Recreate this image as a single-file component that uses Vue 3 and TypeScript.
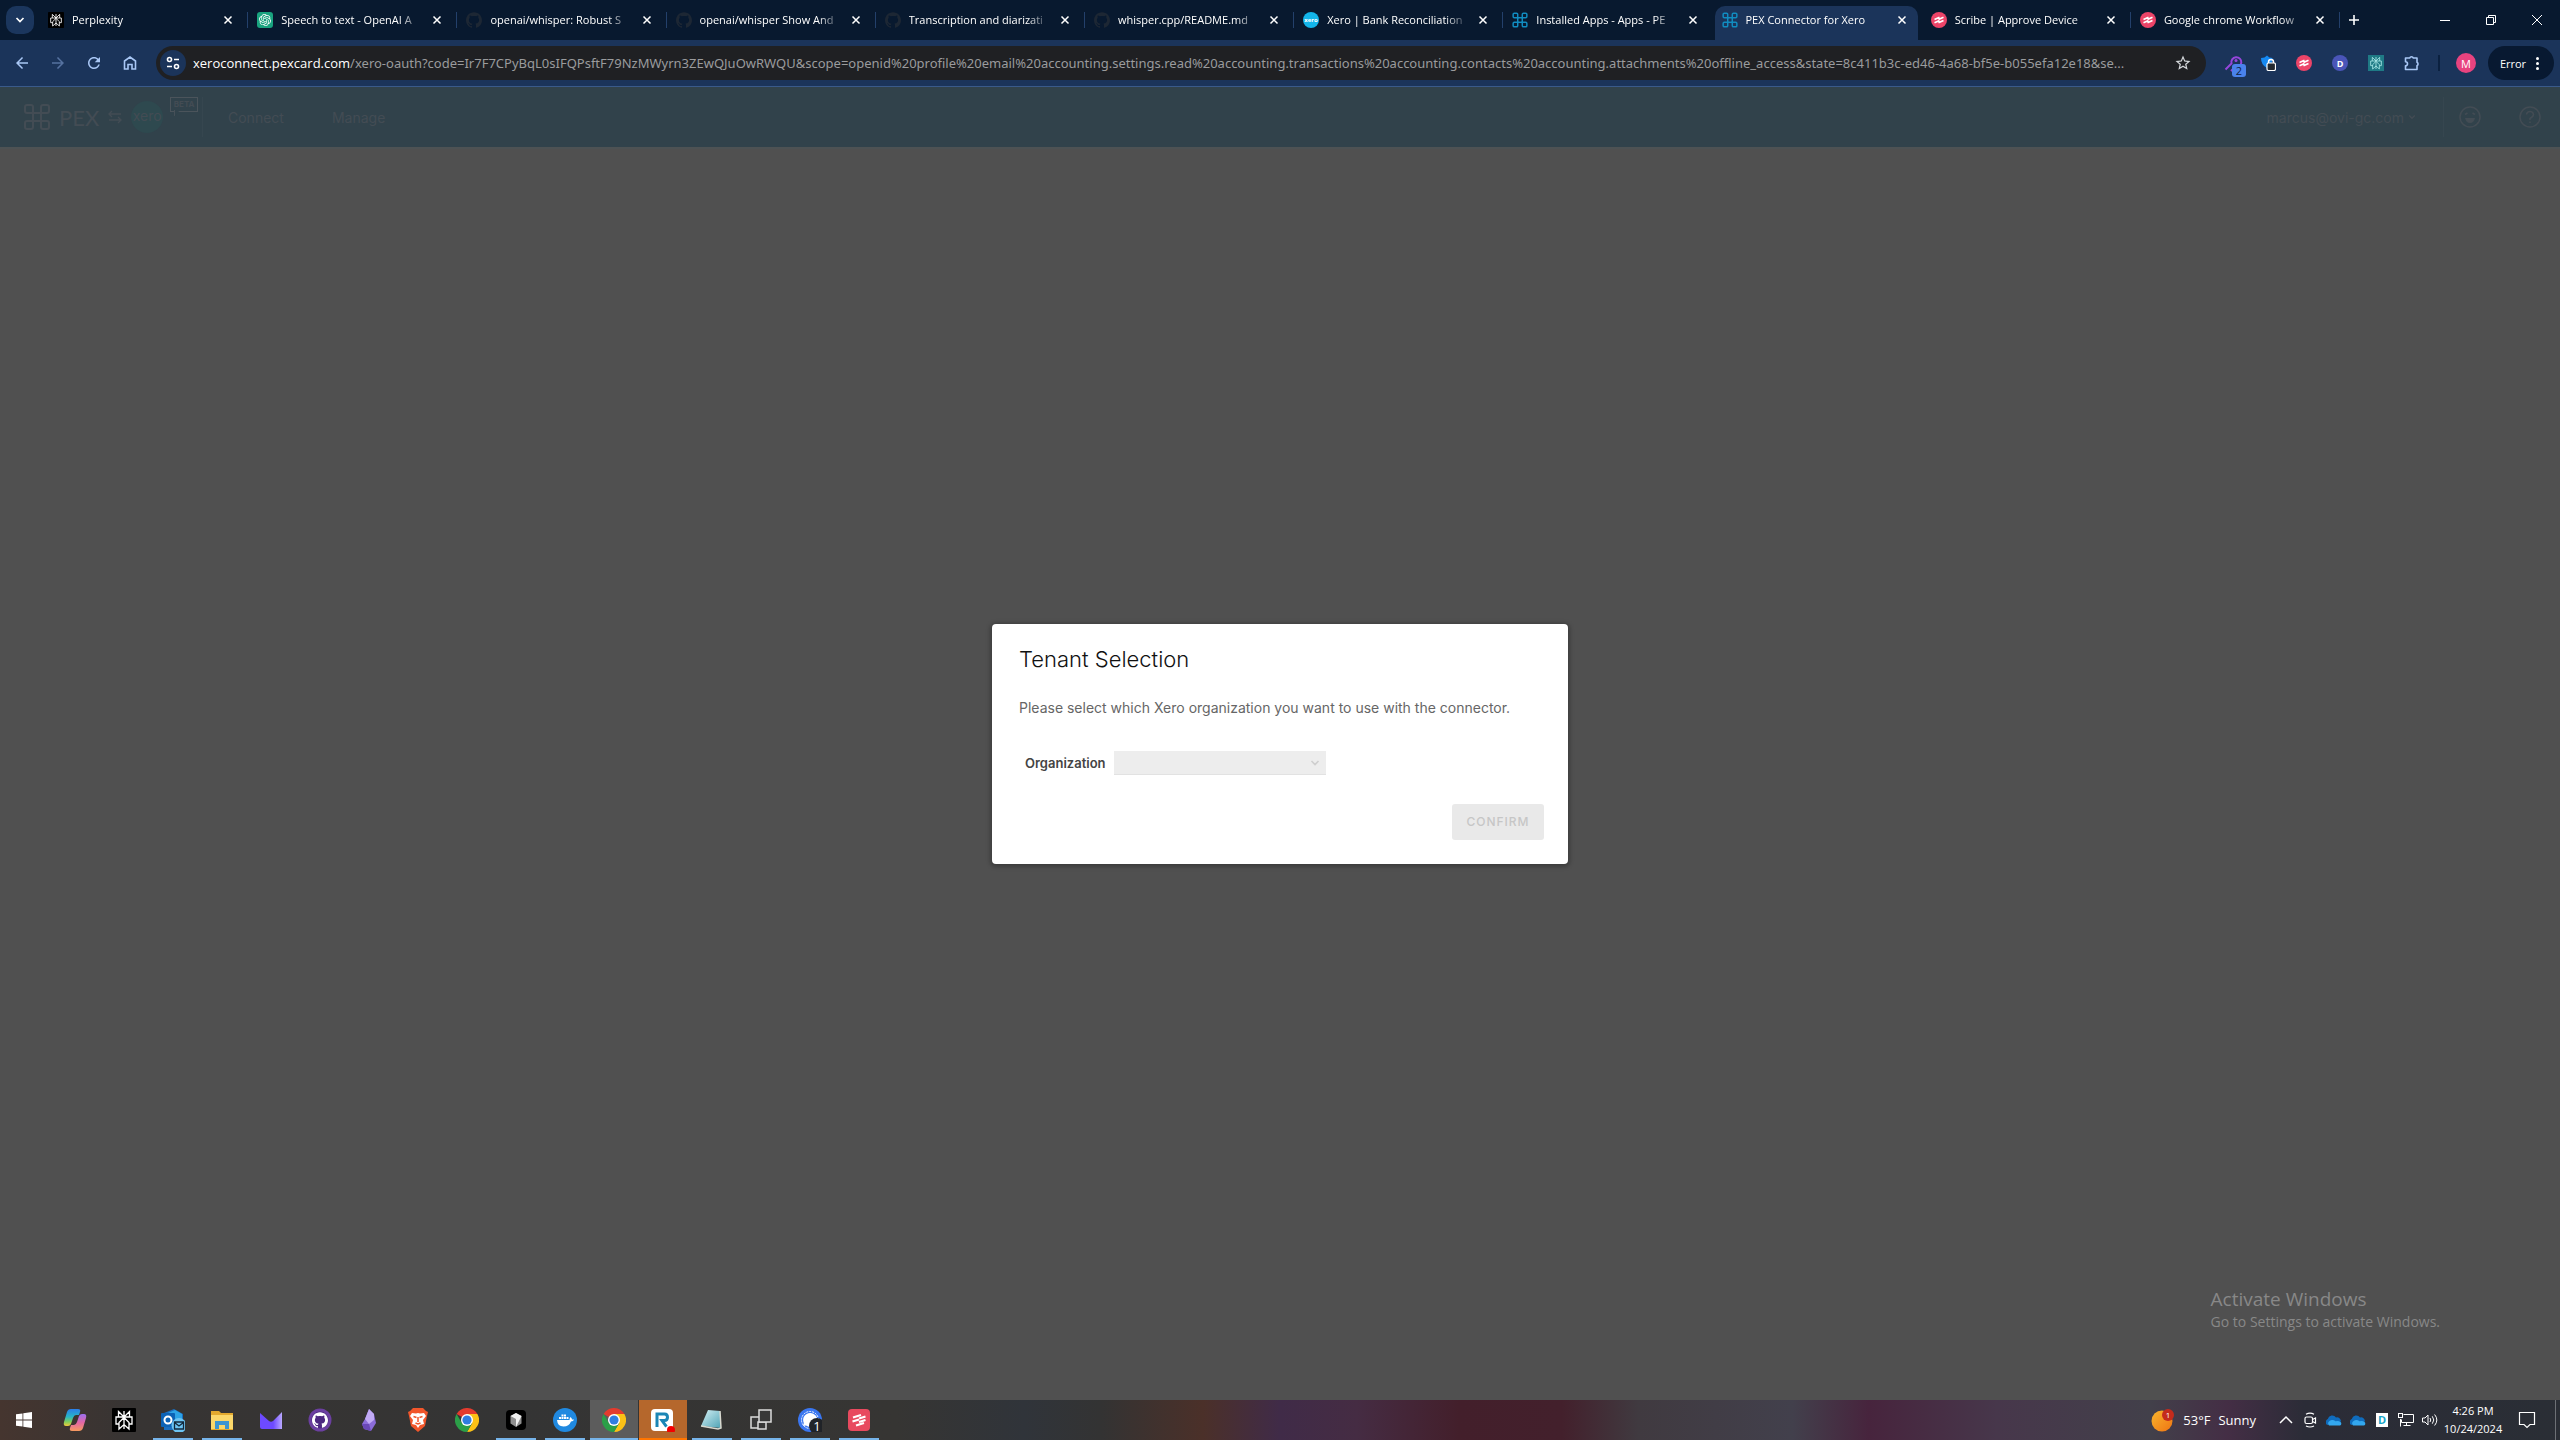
<script setup lang="ts">
import { ref } from 'vue'

interface Tab {
  title: string
  icon: string
  active?: boolean
}

interface TaskItem {
  name: string
  icon: string
  state?: 'running' | 'active' | 'alert'
}

const tabs: Tab[] = [
  { title: 'Perplexity', icon: 'perplexity' },
  { title: 'Speech to text - OpenAI A', icon: 'openai' },
  { title: 'openai/whisper: Robust S', icon: 'github-dim' },
  { title: 'openai/whisper Show And', icon: 'github-dim' },
  { title: 'Transcription and diarizati', icon: 'github-dim' },
  { title: 'whisper.cpp/README.md', icon: 'github-dim' },
  { title: 'Xero | Bank Reconciliation', icon: 'xero' },
  { title: 'Installed Apps - Apps - PE', icon: 'pex' },
  { title: 'PEX Connector for Xero', icon: 'pex', active: true },
  { title: 'Scribe | Approve Device', icon: 'scribe' },
  { title: 'Google chrome Workflow', icon: 'scribe' },
]

const extensions = [
  { name: 'Passwords', icon: 'ext-key' },
  { name: 'Privacy', icon: 'ext-lock' },
  { name: 'Scribe', icon: 'scribe' },
  { name: 'Dashlane', icon: 'ext-d' },
  { name: 'Perplexity', icon: 'ext-perplexity' },
  { name: 'Extensions', icon: 'puzzle' },
]

const tasks: TaskItem[] = [
  { name: 'Copilot', icon: 'copilot' },
  { name: 'Perplexity', icon: 'perplexity' },
  { name: 'Outlook', icon: 'outlook', state: 'running' },
  { name: 'File Explorer', icon: 'explorer', state: 'running' },
  { name: 'Proton Mail', icon: 'proton' },
  { name: 'GitHub Desktop', icon: 'github-purple' },
  { name: 'Obsidian', icon: 'obsidian' },
  { name: 'Brave', icon: 'brave' },
  { name: 'Chrome', icon: 'chrome' },
  { name: 'Cursor', icon: 'cursor', state: 'running' },
  { name: 'Docker', icon: 'docker', state: 'running' },
  { name: 'Chrome window', icon: 'chrome', state: 'active' },
  { name: 'Recorder', icon: 'recorder', state: 'alert' },
  { name: 'Notepad', icon: 'notepad', state: 'running' },
  { name: 'Task view', icon: 'windows-stack', state: 'running' },
  { name: 'Signal', icon: 'signal', state: 'running' },
  { name: 'Scribe', icon: 'scribe-square', state: 'running' },
]

const tray = ['tray-camera', 'cloud', 'cloud', 'tray-d', 'network', 'volume']

const path = ref(
  '/xero-oauth?code=Ir7F7CPyBqL0sIFQPsftF79NzMWyrn3ZEwQJuOwRWQU&scope=openid%20profile%20email%20accounting.settings.read%20accounting.transactions%20accounting.contacts%20accounting.attachments%20offline_access&state=8c411b3c-ed46-4a68-bf5e-b055efa12e18&se...',
)
const organization = ref('')
</script>

<template>
  <svg class="sprite" aria-hidden="true">
    <defs>
      <linearGradient id="g-copilot-a" x1="0" y1="0" x2="0" y2="1">
        <stop offset="0" stop-color="#2b7de9" />
        <stop offset=".45" stop-color="#27b5c8" />
        <stop offset=".75" stop-color="#7fce5b" />
        <stop offset="1" stop-color="#f0c83c" />
      </linearGradient>
      <linearGradient id="g-copilot-b" x1="0" y1="0" x2="0" y2="1">
        <stop offset="0" stop-color="#9a6ff0" />
        <stop offset=".5" stop-color="#e267a5" />
        <stop offset="1" stop-color="#f79a5e" />
      </linearGradient>
      <linearGradient id="g-sun" x1="0" y1="0" x2="1" y2="1">
        <stop offset="0" stop-color="#f9b52c" />
        <stop offset="1" stop-color="#ef7413" />
      </linearGradient>
      <linearGradient id="g-note" x1="0" y1="0" x2="1" y2="1">
        <stop offset="0" stop-color="#d5f1f5" />
        <stop offset="1" stop-color="#4fa3b5" />
      </linearGradient>
      <linearGradient id="g-proton" x1="0" y1="0" x2="1" y2="0">
        <stop offset="0" stop-color="#6d4aff" />
        <stop offset=".6" stop-color="#6d4aff" />
        <stop offset="1" stop-color="#b9a8ff" />
      </linearGradient>
    </defs>

    <symbol id="chevron-down" viewBox="0 0 10 10">
      <path d="M1.500 3L5 6.500 8.500 3" fill="none" stroke="currentColor" stroke-width="1.700" />
    </symbol>
    <symbol id="chevron-up" viewBox="0 0 14 14">
      <path d="M1 10l6-6 6 6" fill="none" stroke="currentColor" stroke-width="1.500" />
    </symbol>
    <symbol id="close" viewBox="0 0 10 10">
      <path d="M1.500 1.500l7 7M8.500 1.500l-7 7" stroke="currentColor" stroke-width="1.500" />
    </symbol>
    <symbol id="plus" viewBox="0 0 12 12">
      <path d="M6 1v10M1 6h10" stroke="currentColor" stroke-width="1.600" />
    </symbol>
    <symbol id="minimize" viewBox="0 0 12 12">
      <path d="M1 6.500h10" stroke="currentColor" />
    </symbol>
    <symbol id="restore" viewBox="0 0 12 12">
      <path d="M1.500 3.500h7v7h-7zM3.500 3.500v-2h7v7h-2" fill="none" stroke="currentColor" />
    </symbol>
    <symbol id="close-window" viewBox="0 0 12 12">
      <path d="M1 1l10 10M11 1L1 11" stroke="currentColor" />
    </symbol>
    <symbol id="back" viewBox="0 0 24 24">
      <path d="M20 11H7.830l5.590-5.590L12 4l-8 8 8 8 1.410-1.410L7.830 13H20z" fill="currentColor" />
    </symbol>
    <symbol id="forward" viewBox="0 0 24 24">
      <path d="M4 11h12.170l-5.590-5.590L12 4l8 8-8 8-1.410-1.410L16.170 13H4z" fill="currentColor" />
    </symbol>
    <symbol id="reload" viewBox="0 0 24 24">
      <path
        d="M17.650 6.350C16.200 4.900 14.210 4 12 4c-4.420 0-7.990 3.580-7.990 8s3.570 8 7.990 8c3.730 0 6.840-2.550 7.730-6h-2.080c-.82 2.330-3.040 4-5.650 4-3.310 0-6-2.690-6-6s2.690-6 6-6c1.660 0 3.140.69 4.220 1.780L13 11h7V4z"
        fill="currentColor"
      />
    </symbol>
    <symbol id="home" viewBox="0 0 16 16">
      <path d="M2.500 14V6L8 2l5.500 4v8h-3.500V9.500H6V14z" fill="none" stroke="currentColor" stroke-width="1.600" />
    </symbol>
    <symbol id="tune" viewBox="0 0 16 16">
      <g fill="none" stroke="currentColor" stroke-width="1.600">
        <circle cx="4.500" cy="4.500" r="2" />
        <path d="M9 4.500h5M2 11.500h5" />
        <circle cx="11.500" cy="11.500" r="2" />
      </g>
    </symbol>
    <symbol id="star" viewBox="0 0 24 24">
      <path
        d="M22 9.240l-7.190-.62L12 2 9.190 8.630 2 9.240l5.460 4.730L5.820 21 12 17.270 18.180 21l-1.630-7.030zM12 15.400l-3.760 2.270 1-4.280-3.320-2.880 4.380-.38L12 6.100l1.710 4.040 4.380.38-3.320 2.880 1 4.280z"
        fill="currentColor"
      />
    </symbol>
    <symbol id="puzzle" viewBox="0 0 16 16">
      <path
        d="M1.500 3h4.200a1.900 1.900 0 0 1 3.600 0h3.700v4.200a1.900 1.900 0 0 1 0 3.400V14.500H1.500v-3.700a2 2 0 0 0 0-4z"
        fill="none"
        stroke="#a9c7f5"
        stroke-width="1.600"
        stroke-linejoin="round"
      />
    </symbol>
    <symbol id="perplexity" viewBox="0 0 24 24">
      <rect width="24" height="24" rx="1" fill="#000" />
      <g fill="none" stroke="#fff" stroke-width="1.300">
        <path d="M12 3v18M6.500 3.500L12 9l5.500-5.500V9H6.500zM6.500 9H4v7h3M17.500 9H20v7h-3M12 9.500l-5 5V21l5-4.500 5 4.500v-6.500z" />
      </g>
    </symbol>
    <symbol id="ext-perplexity" viewBox="0 0 24 24">
      <rect width="24" height="24" fill="#1f7a85" />
      <g fill="none" stroke="#a7e5e6" stroke-width="1.300">
        <path d="M12 3v18M6.500 3.500L12 9l5.500-5.500V9H6.500zM6.500 9H4v7h3M17.500 9H20v7h-3M12 9.500l-5 5V21l5-4.500 5 4.500v-6.500z" />
      </g>
    </symbol>
    <symbol id="openai" viewBox="0 0 32 32">
      <rect width="32" height="32" rx="6" fill="#19a37f" />
      <path
        transform="translate(4 4)"
        fill="#fff"
        d="M22.282 9.821a5.985 5.985 0 0 0-.516-4.910 6.046 6.046 0 0 0-6.510-2.900A6.065 6.065 0 0 0 4.981 4.180a5.985 5.985 0 0 0-3.998 2.900 6.046 6.046 0 0 0 .743 7.097 5.980 5.980 0 0 0 .510 4.911 6.051 6.051 0 0 0 6.515 2.900A5.985 5.985 0 0 0 13.260 24a6.056 6.056 0 0 0 5.772-4.206 5.990 5.990 0 0 0 3.997-2.900 6.056 6.056 0 0 0-.747-7.073zM13.260 22.430a4.476 4.476 0 0 1-2.876-1.040l.141-.081 4.779-2.758a.795.795 0 0 0 .392-.681v-6.737l2.020 1.168a.071.071 0 0 1 .038.052v5.583a4.504 4.504 0 0 1-4.494 4.494zM3.600 18.304a4.470 4.470 0 0 1-.535-3.014l.142.085 4.783 2.759a.771.771 0 0 0 .780 0l5.843-3.369v2.332a.080.080 0 0 1-.033.062L9.740 19.950a4.500 4.500 0 0 1-6.140-1.646zM2.340 7.896a4.485 4.485 0 0 1 2.366-1.973V11.600a.766.766 0 0 0 .388.676l5.815 3.355-2.020 1.168a.076.076 0 0 1-.071 0l-4.830-2.786A4.504 4.504 0 0 1 2.340 7.872zm16.597 3.855l-5.833-3.387L15.119 7.200a.076.076 0 0 1 .071 0l4.830 2.791a4.494 4.494 0 0 1-.676 8.105v-5.678a.790.790 0 0 0-.407-.667zm2.010-3.023l-.141-.085-4.774-2.782a.776.776 0 0 0-.785 0L9.409 9.230V6.897a.066.066 0 0 1 .028-.061l4.830-2.787a4.500 4.500 0 0 1 6.680 4.660zm-12.640 4.135l-2.020-1.164a.080.080 0 0 1-.038-.057V6.075a4.500 4.500 0 0 1 7.375-3.453l-.142.080L8.704 5.460a.795.795 0 0 0-.393.681zm1.097-2.365l2.602-1.500 2.607 1.500v2.999l-2.597 1.500-2.607-1.500z"
      />
    </symbol>
    <symbol id="octocat" viewBox="0 0 24 24">
      <path
        fill="currentColor"
        d="M12 .297c-6.630 0-12 5.373-12 12 0 5.303 3.438 9.800 8.205 11.385.6.113.82-.258.82-.577 0-.285-.01-1.040-.015-2.040-3.338.724-4.042-1.610-4.042-1.610C4.422 18.070 3.633 17.700 3.633 17.700c-1.087-.744.084-.729.084-.729 1.205.084 1.838 1.236 1.838 1.236 1.070 1.835 2.809 1.305 3.495.998.108-.776.417-1.305.760-1.605-2.665-.300-5.466-1.332-5.466-5.930 0-1.310.465-2.380 1.235-3.220-.135-.303-.540-1.523.105-3.176 0 0 1.005-.322 3.300 1.230.960-.267 1.980-.399 3-.405 1.020.006 2.040.138 3 .405 2.280-1.552 3.285-1.230 3.285-1.230.645 1.653.240 2.873.120 3.176.765.840 1.230 1.910 1.230 3.220 0 4.610-2.805 5.625-5.475 5.920.420.360.810 1.096.810 2.220 0 1.606-.015 2.896-.015 3.286 0 .315.210.690.825.570C20.565 22.092 24 17.592 24 12.297c0-6.627-5.373-12-12-12"
      />
    </symbol>
    <symbol id="github-dim" viewBox="0 0 24 24">
      <use href="#octocat" width="24" height="24" color="#1d2734" />
    </symbol>
    <symbol id="github-purple" viewBox="0 0 24 24">
      <circle cx="12" cy="12" r="11.500" fill="#6b3fa0" />
      <circle cx="12" cy="12" r="8.500" fill="#4c2880" />
      <use href="#octocat" x="4" y="4" width="16" height="16" color="#fff" />
    </symbol>
    <symbol id="xero" viewBox="0 0 16 16">
      <circle cx="8" cy="8" r="8" fill="#13b5ea" />
      <text x="8" y="10" font-family="Open Sans, sans-serif" font-size="6" font-weight="700" text-anchor="middle" fill="#fff">xero</text>
    </symbol>
    <symbol id="pex-mark" viewBox="0 0 28 28">
      <g fill="none" stroke="currentColor">
        <rect x="10" y="10" width="8" height="8" />
        <path d="M10 10H4a2 2 0 0 1-2-2V4a2 2 0 0 1 2-2h4a2 2 0 0 1 2 2zM18 10h6a2 2 0 0 0 2-2V4a2 2 0 0 0-2-2h-4a2 2 0 0 0-2 2zM10 18H4a2 2 0 0 0-2 2v4a2 2 0 0 0 2 2h4a2 2 0 0 0 2-2zM18 18h6a2 2 0 0 1 2 2v4a2 2 0 0 1-2 2h-4a2 2 0 0 1-2-2z" />
      </g>
    </symbol>
    <symbol id="pex" viewBox="0 0 28 28">
      <use href="#pex-mark" width="28" height="28" color="#118cc0" stroke-width="2.600" />
    </symbol>
    <symbol id="scribe" viewBox="0 0 16 16">
      <circle cx="8" cy="8" r="8" fill="#ec4468" />
      <path
        d="M3.500 7.500l5-2.200M7.500 7.500l5-2.200M3.500 10.700l5-2.200M7.500 10.700l5-2.200"
        fill="none"
        stroke="#fff"
        stroke-width="1.700"
      />
    </symbol>
    <symbol id="scribe-square" viewBox="0 0 24 24">
      <rect x="1" y="1" width="22" height="22" rx="4" fill="#e84a5f" />
      <path
        d="M6 9.500L14 7M12 10.500l6.500-2M5.500 13.500l6.500-2M12 14l6.500-2M9 17.500l8-2.500"
        fill="none"
        stroke="#fff"
        stroke-width="2.200"
      />
    </symbol>
    <symbol id="ext-key" viewBox="0 0 22 22">
      <path d="M1.500 14.500l6-6a5 5 0 1 1 3.500 3.500l-4 4" fill="none" stroke="#9646dc" stroke-width="2" />
      <circle cx="12" cy="5.500" r="1.500" fill="#9646dc" />
      <rect x="8" y="9" width="14" height="13" rx="3" fill="#4a82ec" />
      <text x="15" y="20" font-family="Open Sans, sans-serif" font-size="11" text-anchor="middle" fill="#10213f">2</text>
    </symbol>
    <symbol id="ext-lock" viewBox="0 0 16 16">
      <path d="M1 3q4 0 6-2.500Q9 3 12.500 3q0 7-5.500 10Q1 10 1 3z" fill="#1689f2" />
      <path d="M8.500 8.500V7a2.300 2.300 0 0 1 5 0v1.500" fill="none" stroke="#fff" stroke-width="1.500" />
      <rect x="7" y="8" width="8.500" height="7.500" rx="1.500" fill="#24292f" stroke="#fff" stroke-width="1.200" />
    </symbol>
    <symbol id="ext-d" viewBox="0 0 16 16">
      <circle cx="8" cy="8" r="8" fill="#4a55b8" />
      <text x="8" y="11.500" font-family="Open Sans, sans-serif" font-size="9" font-weight="700" text-anchor="middle" fill="#fff">D</text>
    </symbol>

    <symbol id="win" viewBox="0 0 16 16">
      <path d="M0 2.300L6.500 1.400v6.200H0zM7.300 1.300L16 0v7.600H7.300zM0 8.400h6.500v6.200L0 13.700zM7.300 8.400H16V16l-8.700-1.300z" fill="#fff" />
    </symbol>
    <symbol id="copilot" viewBox="0 0 24 24">
      <path d="M8 1h7q3 0 2 3l-1 3h-3q-2 0-3 3l-2 6q-1 2-3 2H3q-3 0-2-4L4 4q1-3 4-3z" fill="url(#g-copilot-a)" />
      <path d="M16 23H9q-3 0-2-3l1-3h3q2 0 3-3l2-6q1-2 3-2h2q3 0 2 4l-3 10q-1 3-4 3z" fill="url(#g-copilot-b)" />
    </symbol>
    <symbol id="outlook" viewBox="0 0 24 24">
      <path d="M3 5l10-4 9 5v11l-9 5H3z" fill="#1a6fc0" />
      <path d="M7 5l7-3 7 4v8H7z" fill="#2da3e6" />
      <rect x="0" y="5" width="14" height="14" rx="1" fill="#0c62b5" />
      <circle cx="7" cy="12" r="3.500" fill="none" stroke="#fff" stroke-width="2" />
      <circle cx="18" cy="17.500" r="7.500" fill="#6cc3f2" />
      <path d="M13.500 14h9v7h-9zM13.500 14.500l4.500 3.500 4.500-3.500" fill="none" stroke="#12283c" stroke-width="1.300" />
    </symbol>
    <symbol id="explorer" viewBox="0 0 24 24">
      <path d="M1 3h8l2 2h12v17H1z" fill="#e3a92f" />
      <path d="M1 7h22v14H1z" fill="#fbd76b" />
      <path d="M5 13h14v8h-4v-4H9v4H5z" fill="#3d95d2" />
    </symbol>
    <symbol id="proton" viewBox="0 0 24 24">
      <path d="M1 5l9 8q2 1.500 4 0l9-9v17H3q-2 0-2-2z" fill="url(#g-proton)" />
    </symbol>
    <symbol id="obsidian" viewBox="0 0 24 24">
      <path d="M12 1l5 5 2 9-5 8-7-2-2-5 3-5z" fill="#8b6cd9" />
      <path d="M12 1L8 11l4 5 5-4V6z" fill="#c1aaf5" />
      <path d="M5 16l7 0 2 7-7-2z" fill="#6a48b8" />
    </symbol>
    <symbol id="brave" viewBox="0 0 24 24">
      <path d="M7 0h10l3 3 2 1-1 4-2 10-7 6-7-6L3 8 2 4l2-1z" fill="#f1562b" />
      <path d="M6 5l4 .500 2-.500 2 .500L18 5l2 3-3 4 1 4-4 1-2 3-2-3-4-1 1-4-3-4z" fill="#fff" />
      <path d="M7.500 8.500l3 1M16.500 8.500l-3 1M12 9v5M9.500 15l2.500 1 2.500-1" fill="none" stroke="#f1562b" stroke-width="1.500" />
    </symbol>
    <symbol id="chrome" viewBox="0 0 24 24">
      <path d="M12 12L1.600 6A12 12 0 0 1 22.400 6z" fill="#e33b2e" />
      <path d="M12 12V6h10.400A12 12 0 0 1 12 24l5.200-9z" fill="#fbc116" />
      <path d="M12 12l5.200 3L12 24A12 12 0 0 1 1.600 6l5.200 9z" fill="#2b9f48" />
      <circle cx="12" cy="12" r="6" fill="#fff" />
      <circle cx="12" cy="12" r="4.600" fill="#2f7de1" />
    </symbol>
    <symbol id="cursor" viewBox="0 0 24 24">
      <rect x="2" y="2" width="20" height="20" rx="4" fill="#000" />
      <path d="M6.500 8L12 5l5.500 3v7.500L12 19l-5.500-3.500z" fill="#8f8f8f" />
      <path d="M6.500 8L12 5l5.500 3L12 19v-8z" fill="#f0f0f0" />
    </symbol>
    <symbol id="docker" viewBox="0 0 24 24">
      <circle cx="12" cy="12" r="12" fill="#2089e0" />
      <path d="M4 12h12.500q0-2 1-3 1.500 1 1.500 2.500h2q-.5 2-3 2-2 5-7.500 5-6 0-6.500-6.500z" fill="#fff" />
      <path d="M6 9h2v2H6zM8.500 9h2v2h-2zM11 9h2v2h-2zM13.500 9h2v2h-2zM8.500 6.500h2v2h-2zM11 6.500h2v2h-2z" fill="#fff" />
    </symbol>
    <symbol id="recorder" viewBox="0 0 24 24">
      <rect x="0" y="1" width="22" height="22" rx="4" fill="#fff" />
      <path d="M6 19V6h7.500q3 0 3 3.300t-3 3.300H11l4.500 6" fill="none" stroke="#1c86b5" stroke-width="3" />
      <circle cx="20" cy="22" r="4" fill="#f40000" />
    </symbol>
    <symbol id="notepad" viewBox="0 0 24 24">
      <path d="M8 2l12 1 1 17-20-2z" fill="url(#g-note)" />
      <path d="M1 18l17 3 3-1L20 3" fill="none" stroke="#d9d9d0" stroke-width="1.500" />
    </symbol>
    <symbol id="windows-stack" viewBox="0 0 24 24">
      <g fill="#383838" stroke="#dcdcdc" stroke-width="1.500">
        <rect x="2" y="9" width="9" height="11" />
        <rect x="9" y="14" width="8" height="7" />
        <rect x="10" y="2" width="12" height="12" />
      </g>
    </symbol>
    <symbol id="signal" viewBox="0 0 24 24">
      <circle cx="12" cy="12" r="12" fill="#3a76f0" />
      <circle cx="12" cy="12" r="8.500" fill="none" stroke="#fff" stroke-dasharray="2 1" />
      <path d="M12 5a7 7 0 1 1-4 12.500L5 18l.800-3A7 7 0 0 1 12 5z" fill="#fff" />
      <circle cx="19" cy="18" r="8" fill="#202328" />
      <text x="19" y="23" font-family="Open Sans, sans-serif" font-size="13" text-anchor="middle" fill="#fff">1</text>
    </symbol>
    <symbol id="weather" viewBox="0 0 24 24">
      <circle cx="11" cy="13" r="10.500" fill="url(#g-sun)" />
      <circle cx="17" cy="7" r="6" fill="#c42b1c" />
      <text x="17" y="10" font-family="Open Sans, sans-serif" font-size="8" text-anchor="middle" fill="#fff">1</text>
    </symbol>
    <symbol id="tray-camera" viewBox="0 0 16 16">
      <g fill="none" stroke="#fff" stroke-width="1.200">
        <rect x="3" y="5" width="7.500" height="6.500" rx="1.500" />
        <path d="M10.500 7.500l3-1.500v5l-3-1.500M4 2.200q4-2 8 0M4 14q4 2 8 0" />
      </g>
    </symbol>
    <symbol id="cloud" viewBox="0 0 16 16">
      <path d="M1 13a3.500 3.500 0 0 1 .8-6A4.500 4.500 0 0 1 10 5.500 4 4 0 0 1 15 9.500z" fill="#0f6cbd" />
      <path d="M3 13.500a2.800 2.800 0 0 1 .500-4.500q3-2 6 .300 3-1 5 .700a2 2 0 0 1-.500 3.500z" fill="#33a7ee" />
    </symbol>
    <symbol id="tray-d" viewBox="0 0 16 16">
      <rect x="2" y="1" width="12" height="14" fill="#fff" />
      <text x="8" y="12" font-family="Open Sans, sans-serif" font-size="11" font-weight="700" text-anchor="middle" fill="#16a6c9">D</text>
    </symbol>
    <symbol id="network" viewBox="0 0 16 16">
      <g fill="none" stroke="#fff">
        <path d="M5.500 2.500h10v8h-12v-3M8.500 10.500v3M5.500 13.500h7M2.500 7v7.500" />
        <rect x=".500" y="1.500" width="4" height="4" />
      </g>
    </symbol>
    <symbol id="volume" viewBox="0 0 16 16">
      <path d="M.500 6h2.500l3-3v10l-3-3H.500zM8 6q1.500 2 0 4M10.300 4.300q3 3.700 0 7.400M12.600 2.500q4.500 5.500 0 11" fill="none" stroke="#fff" />
    </symbol>
    <symbol id="notice" viewBox="0 0 18 18">
      <path d="M1.500 1.500h15v12H12l-3 3-3-3H1.500z" fill="none" stroke="#fff" stroke-width="1.200" />
    </symbol>
    <symbol id="swap" viewBox="0 0 14 14">
      <path d="M4 1L1 4l3 3M1 4h12M10 7l3 3-3 3M13 10H1" fill="none" stroke="currentColor" stroke-width="1.400" />
    </symbol>
    <symbol id="smile" viewBox="0 0 22 22">
      <g fill="none" stroke="currentColor" stroke-width="1.500">
        <circle cx="11" cy="11" r="10" />
        <path d="M6 8.500l2.500-1.500M13.500 7L16 8.500" />
      </g>
      <path d="M6 12h10q-1 5-5 5t-5-5z" fill="currentColor" />
    </symbol>
    <symbol id="help" viewBox="0 0 22 22">
      <g fill="none" stroke="currentColor" stroke-width="1.500">
        <circle cx="11" cy="11" r="10" />
        <path d="M7.500 8.500Q8 5.500 11 5.500t3.500 3q0 2-3.500 4V14M11 15.500V17" />
      </g>
    </symbol>
  </svg>

  <div class="desktop">
    <header class="tab-strip">
      <button class="tab-search" aria-label="Search tabs"><svg width="10" height="10"><use href="#chevron-down" /></svg></button>
      <div class="tabs">
        <div v-for="tab in tabs" :key="tab.title" class="tab" :class="{ active: tab.active }">
          <svg class="favicon" width="16" height="16"><use :href="'#' + tab.icon" /></svg>
          <span class="tab-title">{{ tab.title }}</span>
          <button class="tab-close" aria-label="Close tab"><svg width="10" height="10"><use href="#close" /></svg></button>
        </div>
      </div>
      <div class="window-controls">
        <button class="new-tab" aria-label="New tab"><svg width="12" height="12"><use href="#plus" /></svg></button>
        <button aria-label="Minimize"><svg width="12" height="12"><use href="#minimize" /></svg></button>
        <button aria-label="Restore"><svg width="12" height="12"><use href="#restore" /></svg></button>
        <button aria-label="Close"><svg width="12" height="12"><use href="#close-window" /></svg></button>
      </div>
    </header>

    <nav class="toolbar" aria-label="Browser toolbar">
      <button class="nav-button" aria-label="Back"><svg width="18" height="18"><use href="#back" /></svg></button>
      <button class="nav-button faded" aria-label="Forward"><svg width="18" height="18"><use href="#forward" /></svg></button>
      <button class="nav-button" aria-label="Reload"><svg width="18" height="18"><use href="#reload" /></svg></button>
      <button class="nav-button" aria-label="Home"><svg width="16" height="16"><use href="#home" /></svg></button>
      <div class="omnibox">
        <button class="site-info" aria-label="Site information"><svg width="16" height="16"><use href="#tune" /></svg></button>
        <label for="address">xeroconnect.pexcard.com</label>
        <input id="address" v-model="path" type="text" spellcheck="false" />
        <button class="bookmark" aria-label="Bookmark"><svg width="18" height="18"><use href="#star" /></svg></button>
      </div>
      <div class="extensions">
        <button v-for="ext in extensions" :key="ext.name" :aria-label="ext.name">
          <svg :class="{ badged: ext.icon === 'ext-key' }" width="16" height="16"><use :href="'#' + ext.icon" /></svg>
        </button>
      </div>
      <span class="toolbar-divider"></span>
      <button class="avatar">M</button>
      <button class="error-pill">Error<span class="dots"><i></i><i></i><i></i></span></button>
    </nav>

    <main class="page">
      <div class="app-header">
        <a class="brand" href="#">
          <svg width="28" height="28" stroke-width="2"><use href="#pex-mark" /></svg>
          <span class="brand-name">PEX</span>
          <svg width="14" height="14"><use href="#swap" /></svg>
          <span class="xero-badge">xero</span>
          <span class="beta">BETA</span>
        </a>
        <nav class="links">
          <a href="#">Connect</a>
          <a href="#">Manage</a>
        </nav>
        <a class="account" href="#">marcus@ovi-gc.com<svg width="8" height="8"><use href="#chevron-down" /></svg></a>
        <div class="tools">
          <a href="#" aria-label="Feedback"><svg width="22" height="22"><use href="#smile" /></svg></a>
          <a href="#" aria-label="Help"><svg width="22" height="22"><use href="#help" /></svg></a>
        </div>
      </div>

      <div class="modal-layer">
        <section class="modal" role="dialog" aria-labelledby="modal-title">
          <h1 id="modal-title">Tenant Selection</h1>
          <p>Please select which Xero organization you want to use with the connector.</p>
          <div class="field">
            <label for="organization">Organization</label>
            <div class="select-wrap">
              <select id="organization" v-model="organization" disabled></select>
              <svg width="10" height="10"><use href="#chevron-down" /></svg>
            </div>
          </div>
          <div class="actions"><button disabled>CONFIRM</button></div>
        </section>
      </div>

      <div class="watermark">
        <div class="watermark-title">Activate Windows</div>
        <div>Go to Settings to activate Windows.</div>
      </div>
    </main>

    <footer class="taskbar">
      <button class="start" aria-label="Start"><svg width="16" height="16"><use href="#win" /></svg></button>
      <button v-for="task in tasks" :key="task.name" class="task" :class="task.state" :aria-label="task.name">
        <svg width="24" height="24"><use :href="'#' + task.icon" /></svg>
      </button>
      <button class="weather">
        <svg width="24" height="24"><use href="#weather" /></svg>
        <span>53°F</span><span>Sunny</span>
      </button>
      <div class="tray">
        <button aria-label="Show hidden icons"><svg width="14" height="14"><use href="#chevron-up" /></svg></button>
        <button v-for="(icon, i) in tray" :key="i" :aria-label="icon"><svg width="16" height="16"><use :href="'#' + icon" /></svg></button>
      </div>
      <button class="clock"><span>4:26 PM</span><span>10/24/2024</span></button>
      <button class="notice" aria-label="Notifications"><svg width="18" height="18"><use href="#notice" /></svg></button>
    </footer>
  </div>
</template>

<style>
body {
  margin: 0;
  background: #505050;
}
</style>

<style scoped>
.sprite {
  position: absolute;
  width: 0;
  height: 0;
}

.desktop {
  display: flex;
  flex-direction: column;
  min-height: 100vh;
  font-family: 'Open Sans', 'Noto Sans', sans-serif;
  font-size: 11px;
  color: #fff;
}

svg {
  display: block;
  flex: none;
  overflow: visible;
}

button {
  display: flex;
  align-items: center;
  justify-content: center;
  margin: 0;
  padding: 0;
  border: 0;
  background: none;
  color: inherit;
  font: inherit;
}

a {
  color: inherit;
  text-decoration: none;
}

/* Tab strip */
.tab-strip {
  display: flex;
  align-items: flex-end;
  height: 40px;
  background: #08192f;
}

.tab-search {
  flex: none;
  width: 28px;
  height: 28px;
  margin: 0 5px 6px 6px;
  border-radius: 10px;
  background: #1b365d;
}

.tabs {
  display: flex;
  flex: 1;
  min-width: 0;
}

.tab {
  position: relative;
  display: flex;
  flex: 1 1 0;
  align-items: center;
  min-width: 0;
  height: 34px;
  box-sizing: border-box;
  padding: 0 12px 6px 9px;
}

.tab::after {
  content: '';
  position: absolute;
  right: 0;
  top: 6px;
  width: 1px;
  height: 16px;
  background: #23406b;
}

.tab.active::after,
.tab:has(+ .active)::after {
  display: none;
}

.tab.active::before {
  content: '';
  position: absolute;
  inset: 0 4px 0 2px;
  border-radius: 10px 10px 0 0;
  background: #1b345a;
}

.tab > * {
  position: relative;
}

.tab-title {
  flex: 1;
  min-width: 0;
  margin: 0 5px 0 8px;
  overflow: hidden;
  white-space: nowrap;
  line-height: 20px;
  mask-image: linear-gradient(to right, #000 118px, transparent 142px);
}

.tab-close {
  width: 16px;
  height: 16px;
}

.window-controls {
  display: flex;
  flex: none;
  width: 220px;
  height: 40px;
}

.window-controls button {
  width: 46px;
}

.window-controls .new-tab {
  width: 28px;
  margin-right: auto;
}

/* Toolbar */
.toolbar {
  display: flex;
  align-items: center;
  height: 46px;
  padding: 0 6px 0 4px;
  border-bottom: 1px solid #3a5a8a;
  background: #1b345a;
}

.nav-button {
  width: 36px;
  height: 34px;
  color: #a9c7f5;
}

.nav-button.faded {
  color: #5672a0;
}

.omnibox {
  display: flex;
  flex: 1;
  align-items: center;
  min-width: 0;
  height: 34px;
  margin: 0 8px;
  border-radius: 17px;
  background: #1f2023;
  font-size: 13px;
}

.site-info {
  flex: none;
  width: 26px;
  height: 26px;
  margin: 0 7px 0 4px;
  border-radius: 50%;
  background: #1b345a;
}

.omnibox input {
  flex: 1;
  min-width: 0;
  padding: 0;
  border: 0;
  outline: 0;
  background: none;
  color: #9a9b9d;
  font-family: 'Noto Sans', sans-serif;
  font-size: 13px;
}

.bookmark {
  width: 46px;
  color: #d5d8dc;
}

.extensions {
  display: flex;
}

.extensions button {
  width: 36px;
  height: 34px;
}

.extensions .badged {
  width: 22px;
  height: 22px;
  margin: 6px 0 0 6px;
}

.toolbar-divider {
  width: 2px;
  height: 16px;
  margin: 0 16px 0 8px;
  background: #0b2140;
}

.avatar {
  width: 20px;
  height: 20px;
  border-radius: 50%;
  background: #e8437f;
}

.error-pill {
  gap: 10px;
  width: 66px;
  height: 34px;
  margin-left: 12px;
  padding-right: 3px;
  border-radius: 17px;
  background: #081931;
}

.dots {
  display: flex;
  flex-direction: column;
  gap: 2px;
}

.dots i {
  width: 3px;
  height: 3px;
  border-radius: 50%;
  background: #fff;
}

/* Page */
.page {
  position: relative;
  display: grid;
  flex: 1;
  background: #505050;
}

.page > .app-header,
.page > .modal-layer {
  grid-area: 1 / 1;
}

.app-header {
  display: flex;
  align-items: center;
  align-self: start;
  height: 60px;
  padding-left: 23px;
  border-bottom: 2px solid #4d5254;
  background: #31424b;
  color: #434c54;
  font-family: Inter, sans-serif;
  font-size: 14px;
}

.brand {
  display: flex;
  align-items: center;
  width: 179px;
  height: 40px;
  border-right: 1px solid #36464f;
}

.brand-name {
  margin: 0 9px 0 8px;
  font-family: Lato, sans-serif;
  font-size: 22px;
  font-weight: 400;
}

.xero-badge {
  width: 32px;
  height: 32px;
  margin-left: 9px;
  border-radius: 50%;
  background: #2e494f;
  font-size: 14px;
  line-height: 30px;
  text-align: center;
}

.beta {
  position: relative;
  align-self: flex-start;
  width: 26px;
  height: 13px;
  margin-left: 7px;
  border: 1px solid #4b545b;
  font-size: 8px;
  font-weight: 700;
  line-height: 13px;
  text-align: center;
}

.beta::after {
  content: '';
  position: absolute;
  left: 3px;
  top: 12px;
  width: 5px;
  height: 5px;
  border: solid #4b545b;
  border-width: 0 0 1px 1px;
  background: #31424b;
  clip-path: polygon(0 0, 100% 0, 0 100%);
}

.links {
  display: flex;
  gap: 48px;
  margin: 0 auto 0 25px;
}

.account {
  display: flex;
  align-items: center;
  gap: 4px;
  padding-right: 27px;
}

.tools {
  display: flex;
  gap: 38px;
  align-items: center;
  height: 40px;
  padding: 0 19px 0 15px;
  border-left: 1px solid #36464f;
}

.modal-layer {
  display: flex;
  align-items: center;
  justify-content: center;
}

.modal {
  z-index: 1;
  width: 576px;
  box-sizing: border-box;
  padding: 23px 24px 24px 27px;
  border-radius: 4px;
  background: #fff;
  box-shadow: 0 1px 4px 2px rgba(0, 0, 0, 0.25);
  color: #666;
  font-family: Inter, 'Liberation Sans', sans-serif;
}

.modal h1 {
  margin: 0;
  color: #111;
  font-size: 22px;
  font-weight: 300;
  line-height: 24px;
}

.modal p {
  margin: 25px 0 0;
  font-size: 14px;
  line-height: 24px;
  white-space: nowrap;
}

.field {
  display: flex;
  align-items: center;
  gap: 8px;
  margin: 31px 0 0 6px;
}

.field label {
  color: #444;
  font-size: 13px;
  font-weight: 600;
}

.select-wrap {
  display: grid;
  align-items: center;
  width: 212px;
}

.select-wrap select,
.select-wrap svg {
  grid-area: 1 / 1;
}

.select-wrap select {
  width: 100%;
  height: 24px;
  border: 0;
  border-bottom: 1px solid #e2e2e2;
  border-radius: 0;
  appearance: none;
  background: #ededed;
  opacity: 1;
}

.select-wrap svg {
  justify-self: end;
  margin-right: 6px;
  color: #cfcfcf;
}

.actions {
  display: flex;
  justify-content: flex-end;
  margin-top: 29px;
}

.actions button {
  width: 92px;
  height: 36px;
  border-radius: 3px;
  background: #e9e9e9;
  color: #c6c6c6;
  font-size: 12px;
  font-weight: 500;
  letter-spacing: 1px;
}

.watermark {
  position: absolute;
  right: 120px;
  bottom: 68px;
  color: #888;
  font-size: 14px;
  line-height: 20px;
}

.watermark-title {
  font-size: 19px;
  line-height: 26px;
}

/* Taskbar */
.taskbar {
  display: flex;
  height: 40px;
  background: linear-gradient(
    90deg,
    #45352f 0,
    #373433 5%,
    #343434 20%,
    #363533 35%,
    #30343a 40%,
    #333333 43%,
    #4b3029 47%,
    #402b48 50%,
    #452c43 53%,
    #431f2b 57%,
    #43202c 61%,
    #403a40 64%,
    #42404c 70%,
    #47243d 73%,
    #47374b 78%,
    #42404a 84%,
    #442e45 87%,
    #2b2c37 90%,
    #2a2e35 100%
  );
}

.start {
  width: 48px;
  margin-right: 3px;
}

.task {
  position: relative;
  flex: none;
  width: 48px;
  margin-right: 1px;
}

.task.active {
  background: #5c5c5c;
}

.task.alert {
  background: #b5672c;
}

.task.running::after,
.task.active::after,
.task.alert::after {
  content: '';
  position: absolute;
  left: 4px;
  right: 4px;
  bottom: 0;
  height: 2px;
  background: #76b4ea;
}

.task.active::after,
.task.alert::after {
  left: 0;
  right: 0;
}

.task.alert::after {
  background: #ff7500;
}

.weather {
  gap: 8px;
  margin-left: auto;
  margin-right: 18px;
  font-size: 13px;
}

.tray {
  display: flex;
}

.tray button {
  width: 24px;
}

.clock {
  flex-direction: column;
  width: 62px;
  line-height: 18px;
}

.notice {
  width: 52px;
  padding-right: 5px;
  margin-right: 4px;
  border-right: 1px solid #6d7075;
}
</style>
